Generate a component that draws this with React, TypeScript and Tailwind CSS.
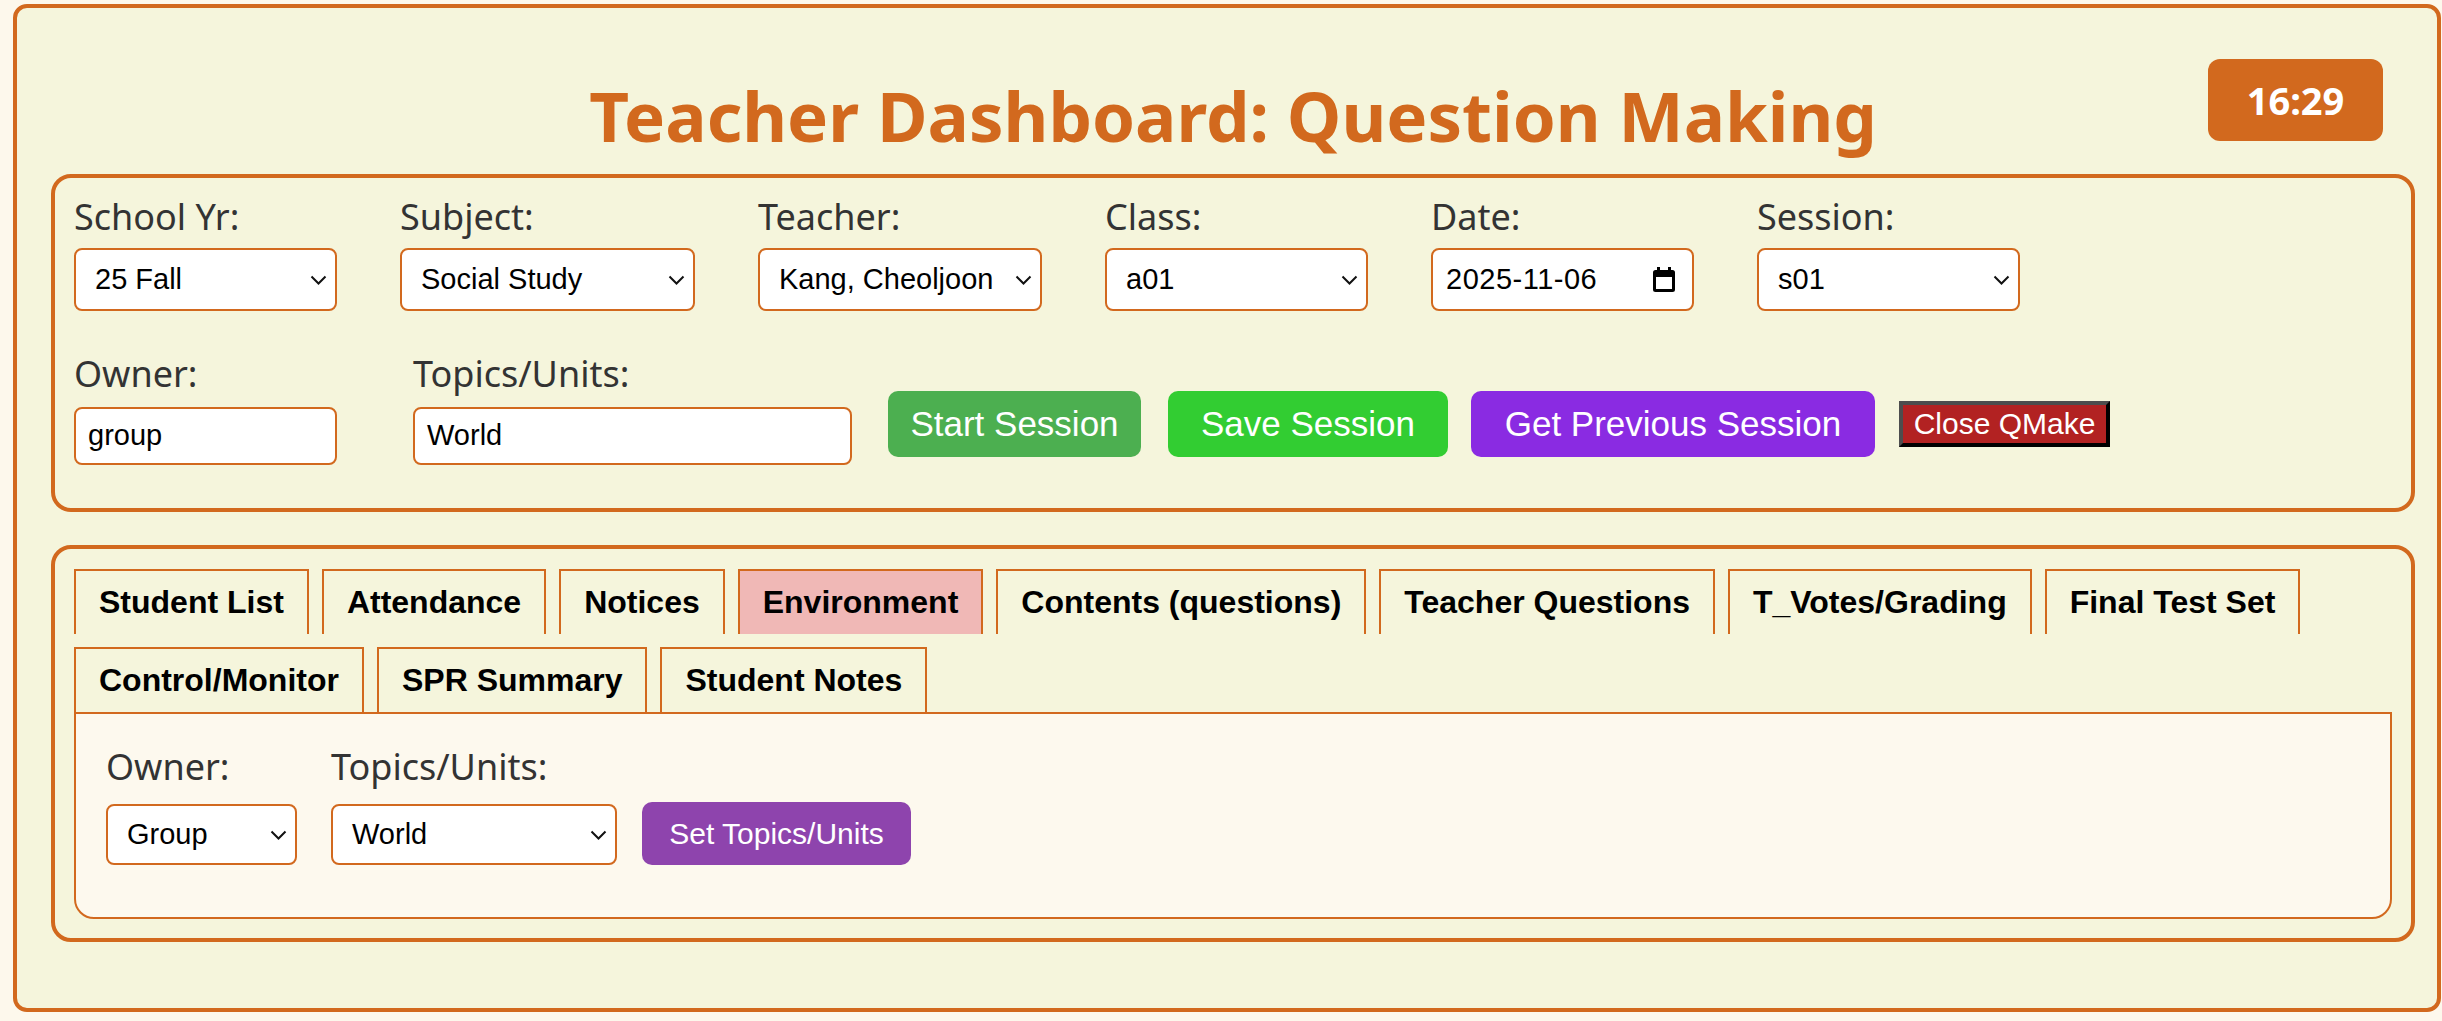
import React from "react";

function Chevron() {
  return (
    <svg width="17" height="10" viewBox="0 0 17 10" className="shrink-0">
      <path d="M1.5 1.5 L8.5 8.5 L15.5 1.5" fill="none" stroke="#111" strokeWidth="2" />
    </svg>
  );
}

function CalendarIcon() {
  return (
    <svg width="22" height="25" viewBox="0 0 22 25" className="shrink-0">
      <path
        d="M4 0h3v3h8V0h3v3h1.5A2.5 2.5 0 0 1 22 5.5v17a2.5 2.5 0 0 1-2.5 2.5h-17A2.5 2.5 0 0 1 0 22.5v-17A2.5 2.5 0 0 1 2.5 3H4V0zM3 10v12h16V10H3z"
        fill="#000"
      />
    </svg>
  );
}

function Select({ value, className }: { value: string; className: string }) {
  return (
    <div
      className={
        "flex items-center justify-between bg-white border-2 border-[#d2691e] rounded-[8px] pl-[19px] pr-[8px] font-['Liberation_Sans',Arial,sans-serif] text-[29px] text-black " +
        className
      }
    >
      <span>{value}</span>
      <Chevron />
    </div>
  );
}

function Label({ text, className }: { text: string; className: string }) {
  return <div className={"text-[36px] leading-[36px] text-[#333] " + className}>{text}</div>;
}

const tabs = [
  "Student List",
  "Attendance",
  "Notices",
  "Environment",
  "Contents (questions)",
  "Teacher Questions",
  "T_Votes/Grading",
  "Final Test Set",
  "Control/Monitor",
  "SPR Summary",
  "Student Notes",
];

export default function App() {
  const active = "Environment";

  return (
    <div className="min-h-screen bg-[#fdf8ec] pt-[4px] pl-[13px] font-['Noto_Sans',sans-serif]">
      <div className="w-[2428px] bg-[#f5f5dc] border-[4px] border-[#d2691e] rounded-[14px] pb-[66px]">
        {/* header */}
        <div className="grid grid-cols-[1fr_auto_1fr] items-start ml-[34px] w-[2364px]">
          <div />
          <h1 className="mt-[73px] text-[69px] leading-[69px] font-bold text-[#d2691e] whitespace-nowrap">
            Teacher Dashboard: Question Making
          </h1>
          <div className="justify-self-end mr-[32px] mt-[51px] w-[175px] h-[82px] rounded-[12px] bg-[#d2691e] flex items-center justify-center text-white font-bold text-[38px]">
            16:29
          </div>
        </div>

        {/* session panel */}
        <div className="ml-[34px] w-[2364px] mt-[24px] border-[4px] border-[#d2691e] rounded-[20px] pt-[21px] pl-[19px] pb-[43px]">
          <div className="flex gap-[63px]">
            <div>
              <Label text="School Yr:" className="mb-[13px]" />
              <Select value="25 Fall" className="w-[263px] h-[63px]" />
            </div>
            <div>
              <Label text="Subject:" className="mb-[13px]" />
              <Select value="Social Study" className="w-[295px] h-[63px]" />
            </div>
            <div>
              <Label text="Teacher:" className="mb-[13px]" />
              <Select value="Kang, Cheoljoon" className="w-[284px] h-[63px]" />
            </div>
            <div>
              <Label text="Class:" className="mb-[13px]" />
              <Select value="a01" className="w-[263px] h-[63px]" />
            </div>
            <div>
              <Label text="Date:" className="mb-[13px]" />
              <div className="flex items-center justify-between w-[263px] h-[63px] bg-white border-2 border-[#d2691e] rounded-[8px] pl-[13px] pr-[17px] font-['Liberation_Sans',Arial,sans-serif] text-[29px] tracking-[0.5px] text-black">
                <span>2025-11-06</span>
                <CalendarIcon />
              </div>
            </div>
            <div>
              <Label text="Session:" className="mb-[13px]" />
              <Select value="s01" className="w-[263px] h-[63px]" />
            </div>
          </div>

          <div className="flex items-start mt-[45px] font-['Liberation_Sans',Arial,sans-serif]">
            <div className="font-['Noto_Sans',sans-serif]">
              <Label text="Owner:" className="mb-[15px]" />
              <div className="w-[263px] h-[58px] bg-white border-2 border-[#d2691e] rounded-[8px] pl-[12px] flex items-center font-['Liberation_Sans',Arial,sans-serif] text-[29px] text-black">
                group
              </div>
            </div>
            <div className="ml-[76px] font-['Noto_Sans',sans-serif]">
              <Label text="Topics/Units:" className="mb-[15px]" />
              <div className="w-[439px] h-[58px] bg-white border-2 border-[#d2691e] rounded-[8px] pl-[12px] flex items-center font-['Liberation_Sans',Arial,sans-serif] text-[29px] text-black">
                World
              </div>
            </div>
            <button className="ml-[36px] mt-[35px] w-[253px] h-[66px] rounded-[10px] bg-[#4caf50] text-white text-[35px]">
              Start Session
            </button>
            <button className="ml-[27px] mt-[35px] w-[280px] h-[66px] rounded-[10px] bg-[#32cd32] text-white text-[35px]">
              Save Session
            </button>
            <button className="ml-[23px] mt-[35px] w-[404px] h-[66px] rounded-[10px] bg-[#8a2be2] text-white text-[35px]">
              Get Previous Session
            </button>
            <button className="ml-[24px] mt-[45px] w-[211px] h-[46px] bg-[#b22222] text-white text-[30px] leading-[30px] border-[4px] border-t-[#4d4d4d] border-l-[#4d4d4d] border-b-black border-r-black">
              Close QMake
            </button>
          </div>
        </div>

        {/* tabs panel */}
        <div className="ml-[34px] w-[2364px] mt-[33px] border-[4px] border-[#d2691e] rounded-[20px] pt-[20px] px-[19px] pb-[19px]">
          <div className="flex flex-wrap gap-x-[13px] gap-y-[13px] font-['Liberation_Sans',Arial,sans-serif]">
            {tabs.map((t) => (
              <div
                key={t}
                className={
                  "border-2 border-b-0 border-[#d2691e] px-[23px] py-[13px] text-[32px] leading-[37px] font-bold text-black " +
                  (t === active ? "bg-[#f0b8b6]" : "bg-[#f5f5dc]")
                }
              >
                {t}
              </div>
            ))}
          </div>
          <div className="border-2 border-[#d2691e] rounded-b-[20px] bg-[#fdf9ee] pt-[35px] pl-[30px] pb-[52px]">
            <div className="flex items-end">
              <div>
                <Label text="Owner:" className="mb-[19px]" />
                <Select value="Group" className="w-[191px] h-[61px]" />
              </div>
              <div className="ml-[34px]">
                <Label text="Topics/Units:" className="mb-[19px]" />
                <Select value="World" className="w-[286px] h-[61px]" />
              </div>
              <button className="ml-[25px] w-[269px] h-[63px] rounded-[10px] bg-[#8e44ad] text-white text-[30px] font-['Liberation_Sans',Arial,sans-serif]">
                Set Topics/Units
              </button>
            </div>
          </div>
        </div>
      </div>
    </div>
  );
}
